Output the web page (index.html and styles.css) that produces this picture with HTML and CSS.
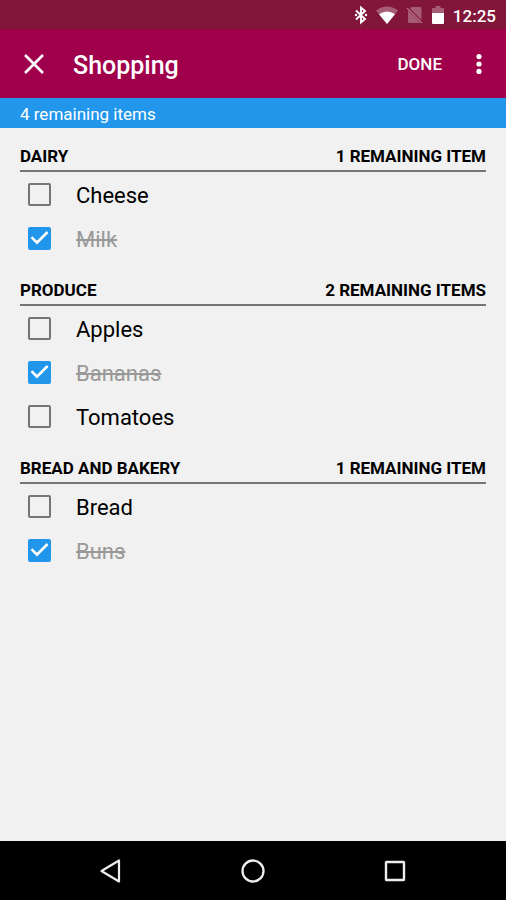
FILE: index.html
```html
<!DOCTYPE html>
<html lang="en">
<head>
  <meta charset="utf-8">
  <meta name="viewport" content="width=device-width, initial-scale=1">
  <title>Shopping</title>
  <link rel="stylesheet" href="styles.css">
</head>
<body>
  <div class="status-bar">
    <svg class="status-icon" width="14" height="20" viewBox="0 0 14 20" aria-hidden="true">
      <path d="M2 5.500l9 8.500L7 17.500V2.500l4 3.500L2 14.500" fill="none" stroke="#fff" stroke-width="1.900"/>
      <circle cx="2" cy="10" r="1.200" fill="#fff"/>
      <circle cx="12" cy="10" r="1.200" fill="#fff"/>
    </svg>
    <svg class="status-icon wifi" width="22" height="18" viewBox="0 0 22 18" aria-hidden="true">
      <path d="M0 4.500Q11-3.500 22 4.500L11 18z" fill="#fff" opacity=".3"/>
      <path d="M3 8.200Q11 2.600 19 8.200L11 18z" fill="#fff"/>
    </svg>
    <svg class="status-icon sim" width="17" height="18" viewBox="0 0 17 18" aria-hidden="true">
      <path d="M5.500 1H14q1.500 0 1.500 1.500V14L4 2.500zM2 4.500L14 16.500Q13.500 17 13 17H3.500Q2 17 2 15.500z" fill="#fff" opacity=".3"/>
      <path d="M1 2l15 15" stroke="#fff" stroke-width="1.200" opacity=".4"/>
    </svg>
    <svg class="status-icon battery" width="12" height="18" viewBox="0 0 12 18" aria-hidden="true">
      <path d="M0 7V3q0-1 1-1h2.500V0h5v2H11q1 0 1 1v4z" fill="#fff" opacity=".3"/>
      <path d="M0 7h12v10q0 1-1 1H1q-1 0-1-1z" fill="#fff"/>
    </svg>
    <time class="clock">12:25</time>
  </div>

  <header class="app-bar">
    <button class="icon-button" type="button" aria-label="Close">
      <svg width="20" height="20" viewBox="0 0 20 20" aria-hidden="true">
        <path d="M1 1l18 18M19 1L1 19" fill="none" stroke="#fff" stroke-width="2.600"/>
      </svg>
    </button>
    <h1 class="title">Shopping</h1>
    <button class="done" type="button">DONE</button>
    <button class="icon-button more" type="button" aria-label="More options">
      <svg width="6" height="20" viewBox="0 0 6 20" fill="#fff" aria-hidden="true">
        <circle cx="3" cy="2.600" r="2.600"/>
        <circle cx="3" cy="10" r="2.600"/>
        <circle cx="3" cy="17.400" r="2.600"/>
      </svg>
    </button>
  </header>

  <p class="summary">4 remaining items</p>

  <main class="lists">
    <section>
      <div class="group-header"><h2>DAIRY</h2><span>1 REMAINING ITEM</span></div>
      <label class="item"><input type="checkbox"><span>Cheese</span></label>
      <label class="item"><input type="checkbox" checked><span>Milk</span></label>
    </section>
    <section>
      <div class="group-header"><h2>PRODUCE</h2><span>2 REMAINING ITEMS</span></div>
      <label class="item"><input type="checkbox"><span>Apples</span></label>
      <label class="item"><input type="checkbox" checked><span>Bananas</span></label>
      <label class="item"><input type="checkbox"><span>Tomatoes</span></label>
    </section>
    <section>
      <div class="group-header"><h2>BREAD AND BAKERY</h2><span>1 REMAINING ITEM</span></div>
      <label class="item"><input type="checkbox"><span>Bread</span></label>
      <label class="item"><input type="checkbox" checked><span>Buns</span></label>
    </section>
  </main>

  <nav class="nav-bar">
    <button class="icon-button" type="button" aria-label="Back">
      <svg width="24" height="24" viewBox="0 0 24 24" aria-hidden="true">
        <path d="M20 1.500v21L2.500 12z" fill="none" stroke="#eee" stroke-width="2.200" stroke-linejoin="round"/>
      </svg>
    </button>
    <button class="icon-button" type="button" aria-label="Home">
      <svg width="24" height="24" viewBox="0 0 24 24" aria-hidden="true">
        <circle cx="12" cy="12" r="10.500" fill="none" stroke="#eee" stroke-width="2.300"/>
      </svg>
    </button>
    <button class="icon-button" type="button" aria-label="Recent apps">
      <svg width="24" height="24" viewBox="0 0 24 24" aria-hidden="true">
        <rect x="3" y="3" width="18" height="18" rx=".5" fill="none" stroke="#eee" stroke-width="2.400"/>
      </svg>
    </button>
  </nav>
</body>
</html>
```
FILE: styles.css
```css
* {
  box-sizing: border-box;
}

body {
  margin: 0;
  min-height: 100vh;
  display: flex;
  flex-direction: column;
  background: #f1f1f1;
  color: #000;
  font-family: Roboto, "Liberation Sans", sans-serif;
}

h1,
h2,
p {
  margin: 0;
}

button {
  padding: 0;
  border: 0;
  background: none;
  color: inherit;
  font: inherit;
}

.icon-button {
  display: flex;
  align-items: center;
  justify-content: center;
  width: 48px;
  height: 48px;
}

.status-bar {
  display: flex;
  align-items: center;
  justify-content: flex-end;
  height: 29px;
  padding: 0 10px 0 0;
  background: #81163a;
  color: #fff;
}

.wifi {
  margin-left: 8px;
}

.sim {
  margin-left: 8px;
}

.battery {
  margin-left: 9px;
}

.clock {
  margin-left: 9px;
  padding-top: 2px;
  font-size: 17px;
  font-weight: 500;
  line-height: 24px;
}

.app-bar {
  display: flex;
  align-items: center;
  height: 69px;
  padding: 0 3px 0 10px;
  background: #a0004b;
  color: #fff;
}

.title {
  flex: 1;
  margin-left: 15px;
  padding-top: 4px;
  font-size: 25px;
  font-weight: 500;
  line-height: 32px;
}

.done {
  height: 48px;
  margin-right: 13px;
  font-size: 17px;
  font-weight: 500;
}

.summary {
  padding: 4px 20px 2px;
  background: #2196eb;
  color: #fff;
  font-size: 17px;
  line-height: 24px;
}

.lists {
  flex: 1;
  padding: 0 20px;
}

section {
  padding-bottom: 2px;
}

.group-header {
  display: flex;
  align-items: flex-end;
  justify-content: space-between;
  height: 44px;
  padding-bottom: 4px;
  border-bottom: 2px solid #757575;
  font-size: 17px;
  font-weight: 700;
  line-height: 20px;
}

.group-header h2 {
  font: inherit;
}

.item {
  display: flex;
  align-items: center;
  gap: 25px;
  height: 44px;
  padding-left: 8px;
  font-size: 22px;
  line-height: 28px;
}

.item span {
  padding-top: 4px;
}

.item input {
  appearance: none;
  width: 23px;
  height: 23px;
  margin: 0;
  border: 2px solid #757575;
  border-radius: 2px;
}

.item input:checked {
  border: 0;
  background: #2196eb;
}

.item input:checked::before {
  content: "";
  display: block;
  height: 100%;
  background: #fff;
  clip-path: polygon(39% 78%, 11% 50%, 19% 42%, 39% 62%, 81% 20%, 89% 28%);
}

.item input:checked + span {
  color: #999;
  text-decoration: line-through;
}

.nav-bar {
  display: flex;
  align-items: center;
  justify-content: center;
  gap: 94px;
  height: 59px;
  background: #000;
}
```
